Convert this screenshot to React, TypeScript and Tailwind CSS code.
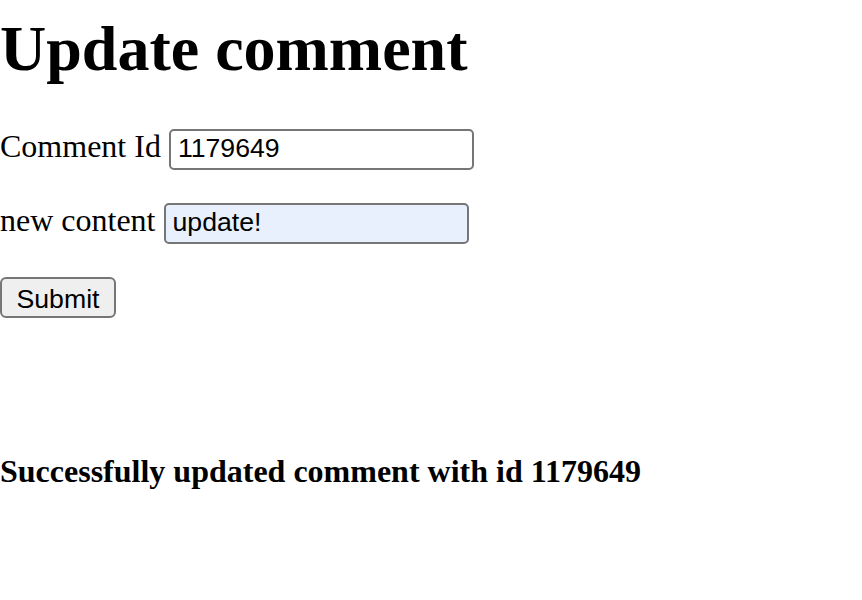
export default function App() {
  return (
    <div className="min-h-screen bg-white text-black font-['Liberation_Serif',serif]">
      <h1 className="pt-[12px] text-[64px] font-bold leading-[74px]">Update comment</h1>

      <form className="mt-[43px] flex flex-col" onSubmit={(e) => e.preventDefault()}>
        <div className="flex items-start gap-2">
          <label htmlFor="commentId" className="text-[32px] leading-[35px]">
            Comment Id
          </label>
          <input
            id="commentId"
            defaultValue="1179649"
            className="h-[41px] w-[305px] rounded-[5px] border-2 border-[#767676] bg-white px-[7px] pb-[2px] font-['Liberation_Sans',sans-serif] text-[26.67px] text-black outline-none"
          />
        </div>

        <div className="mt-[33px] flex items-start gap-2">
          <label htmlFor="content" className="text-[32px] leading-[35px]">
            new content
          </label>
          <input
            id="content"
            defaultValue="update!"
            className="h-[41px] w-[305px] rounded-[5px] border-2 border-[#767676] bg-[#e8f0fe] px-[7px] pb-[2px] font-['Liberation_Sans',sans-serif] text-[26.67px] text-black outline-none"
          />
        </div>

        <div className="mt-[33px]">
          <button
            type="submit"
            className="h-[41px] w-[116px] rounded-[6px] border-2 border-[#767676] bg-[#efefef] pb-[3px] font-['Liberation_Sans',sans-serif] text-[26.67px] text-black"
          >
            Submit
          </button>
        </div>
      </form>

      <h4 className="mt-[136px] text-[32px] font-bold leading-[35px]">
        Successfully updated comment with id 1179649
      </h4>
    </div>
  );
}
